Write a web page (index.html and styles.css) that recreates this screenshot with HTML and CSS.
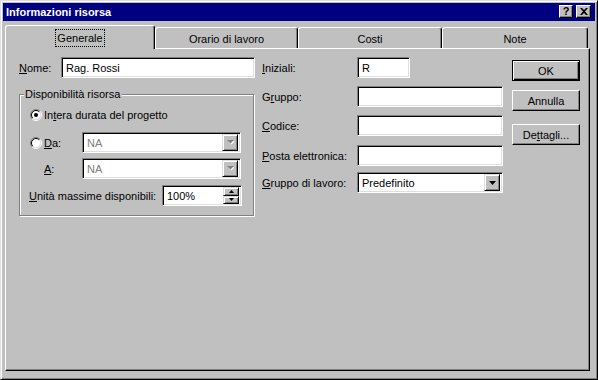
FILE: index.html
```html
<!DOCTYPE html>
<html lang="it">
<head>
  <meta charset="UTF-8">
  <title>Informazioni risorsa</title>
  <link rel="stylesheet" href="styles.css">
</head>
<body>

<div class="window">
  <div class="titlebar">
    <span class="title">Informazioni risorsa</span>
    <span class="cap-btn help">?</span>
    <span class="cap-btn close">
      <svg width="8" height="7" viewBox="0 0 8 7"><path d="M0 0h2l2 2 2-2h2L5 3.5 8 7H6L4 5 2 7H0l3-3.5z" fill="#000"/></svg>
    </span>
  </div>

  <div class="tabs">
    <div class="tab active" style="width:150px"><span class="focus">Generale</span></div>
    <div class="tab" style="width:143px">Orario di lavoro</div>
    <div class="tab" style="width:144px">Costi</div>
    <div class="tab" style="width:146px">Note</div>
  </div>

  <div class="panel">
    <!-- colonna sinistra -->
    <div class="col-left">
      <div class="row">
        <span class="lbl" style="width:42px"><u>N</u>ome:</span>
        <div class="field" style="width:194px">Rag. Rossi</div>
      </div>

      <div class="group">
        <span class="legend">Disponibilità risorsa</span>
        <div class="row radio-row">
          <svg class="radio" width="12" height="12" viewBox="0 0 12 12">
            <circle cx="6" cy="6" r="4.5" fill="#fff"/>
            <path d="M9.9 2.1A5.5 5.5 0 0 0 2.1 9.9" stroke="#808080" fill="none"/>
            <path d="M9.9 2.1A5.5 5.5 0 0 1 2.1 9.9" stroke="#fff" fill="none"/>
            <path d="M9.2 2.8A4.5 4.5 0 0 0 2.8 9.2" stroke="#000" fill="none"/>
            <path d="M9.2 2.8A4.5 4.5 0 0 1 2.8 9.2" stroke="#dfdfdf" fill="none"/>
            <circle cx="6" cy="6" r="2" fill="#000"/>
          </svg>
          <span>In<u>t</u>era durata del progetto</span>
        </div>
        <div class="row gap5">
          <span class="lbl" style="width:52px">
            <svg class="radio" width="12" height="12" viewBox="0 0 12 12">
              <circle cx="6" cy="6" r="4.5" fill="#fff"/>
              <path d="M9.9 2.1A5.5 5.5 0 0 0 2.1 9.9" stroke="#808080" fill="none"/>
              <path d="M9.9 2.1A5.5 5.5 0 0 1 2.1 9.9" stroke="#fff" fill="none"/>
              <path d="M9.2 2.8A4.5 4.5 0 0 0 2.8 9.2" stroke="#000" fill="none"/>
              <path d="M9.2 2.8A4.5 4.5 0 0 1 2.8 9.2" stroke="#dfdfdf" fill="none"/>
            </svg>
            <u>D</u>a:
          </span>
          <div class="field combo disabled" style="width:159px">
            <span class="val">NA</span>
            <span class="drop"><svg width="7" height="5" viewBox="0 0 7 5"><path d="M1 1h7L4.5 4.5z" fill="#fff"/><path d="M0 0h7L3.5 3.5z" fill="#808080"/></svg></span>
          </div>
        </div>
        <div class="row gap6">
          <span class="lbl indent" style="width:52px"><u>A</u>:</span>
          <div class="field combo disabled" style="width:159px">
            <span class="val">NA</span>
            <span class="drop"><svg width="7" height="5" viewBox="0 0 7 5"><path d="M1 1h7L4.5 4.5z" fill="#fff"/><path d="M0 0h7L3.5 3.5z" fill="#808080"/></svg></span>
          </div>
        </div>
        <div class="row">
          <span class="lbl unita" style="width:132px"><u>U</u>nità massime disponibili:</span>
          <div class="field combo" style="width:80px">
            <span class="val">100%</span>
            <span class="spin">
              <span class="spin-btn"><svg width="5" height="3" viewBox="0 0 5 3"><path d="M2.5 0L5 3H0z" fill="#000"/></svg></span>
              <span class="spin-btn"><svg width="5" height="3" viewBox="0 0 5 3"><path d="M0 0h5L2.5 3z" fill="#000"/></svg></span>
            </span>
          </div>
        </div>
      </div>
    </div>

    <!-- colonna centrale -->
    <div class="col-mid">
      <div class="row">
        <span class="lbl mid-lbl"><u>I</u>niziali:</span>
        <div class="field" style="width:53px">R</div>
      </div>
      <div class="row m8">
        <span class="lbl mid-lbl">G<u>r</u>uppo:</span>
        <div class="field" style="width:146px"></div>
      </div>
      <div class="row m8">
        <span class="lbl mid-lbl"><u>C</u>odice:</span>
        <div class="field" style="width:146px"></div>
      </div>
      <div class="row m9">
        <span class="lbl mid-lbl"><u>P</u>osta elettronica:</span>
        <div class="field" style="width:146px"></div>
      </div>
      <div class="row m6">
        <span class="lbl mid-lbl"><u>G</u>ruppo di lavoro:</span>
        <div class="field combo" style="width:146px">
          <span class="val">Predefinito</span>
          <span class="drop"><svg width="7" height="4" viewBox="0 0 7 4"><path d="M0 0h7L3.5 4z" fill="#000"/></svg></span>
        </div>
      </div>
    </div>

    <!-- pulsanti -->
    <div class="col-btns">
      <div class="btn default">OK</div>
      <div class="btn m9">Annulla</div>
      <div class="btn m13">De<u>t</u>tagli...</div>
    </div>
  </div>
</div>

</body>
</html>
```

FILE: styles.css
```css
* {
  box-sizing: border-box;
}

body {
  margin: 0;
  font-family: "Liberation Sans", Arial, sans-serif;
  font-size: 11px;
  color: #000;
  background: #c0c0c0;
}

.window {
  width: 598px;
  height: 380px;
  background: #c0c0c0;
  border: 1px solid;
  border-color: #dfdfdf #000 #000 #dfdfdf;
  box-shadow: inset 1px 1px #fff, inset -1px -1px #808080;
  padding: 2px;
  display: flex;
  flex-direction: column;
}

/* barra del titolo */
.titlebar {
  height: 18px;
  flex: none;
  background: #000080;
  color: #fff;
  display: flex;
  align-items: center;
  padding: 0 4px 0 3px;
}

.title {
  flex: 1;
  font-weight: bold;
}

.cap-btn {
  width: 14px;
  height: 13px;
  margin-top: -1px;
  background: #c0c0c0;
  color: #000;
  border: 1px solid;
  border-color: #fff #000 #000 #fff;
  box-shadow: inset -1px -1px #808080;
  display: flex;
  align-items: center;
  justify-content: center;
  font-weight: bold;
  font-size: 11px;
  line-height: 1;
}

.cap-btn.close {
  margin-left: 3px;
  width: 15px;
}

/* schede */
.tabs {
  height: 27px;
  flex: none;
  display: flex;
  align-items: flex-end;
  padding-left: 2px;
}

.tab {
  height: 21px;
  border: 1px solid;
  border-bottom: none;
  border-color: #fff #000 #000 #fff;
  border-radius: 3px 3px 0 0;
  box-shadow: inset -1px 0 #808080;
  display: flex;
  align-items: center;
  justify-content: center;
  padding-top: 1px;
}

.tab.active {
  height: 24px;
  margin-bottom: -1px;
  position: relative;
  z-index: 1;
  background: #c0c0c0;
}

.focus {
  outline: 1px dotted #000;
  outline-offset: 1px;
  padding: 1px 0;
}

/* pannello */
.panel {
  flex: 1;
  margin: 0 5px 6px 2px;
  border: 1px solid;
  border-color: #fff #000 #000 #fff;
  box-shadow: inset -1px -1px #808080;
  display: flex;
  align-items: flex-start;
  padding: 8px 0 0 13px;
}

.col-left {
  width: 236px;
}

.col-mid {
  width: 241px;
  margin-left: 7px;
}

.col-btns {
  width: 68px;
  margin-left: 9px;
  padding-top: 3px;
}

.row {
  display: flex;
  align-items: center;
  height: 21px;
}

.lbl {
  flex: none;
  display: flex;
  align-items: center;
  white-space: nowrap;
}

.mid-lbl {
  width: 95px;
}

.indent {
  padding-left: 14px;
}

.unita {
  margin-left: -1px;
  margin-right: 1px;
}

.m6 { margin-top: 6px; }
.m8 { margin-top: 8px; }
.m9 { margin-top: 9px; }
.m13 { margin-top: 13px; }
.gap5 { margin-bottom: 5px; }
.gap6 { margin-bottom: 6px; }

/* campi incassati */
.field {
  height: 21px;
  flex: none;
  background: #fff;
  border: 1px solid;
  border-color: #808080 #fff #fff #808080;
  box-shadow: inset 1px 1px #000, inset -1px -1px #dfdfdf;
  padding: 0 2px 0 4px;
  display: flex;
  align-items: center;
  white-space: nowrap;
}

.combo {
  padding-right: 2px;
}

.combo .val {
  flex: 1;
}

.disabled .val {
  color: #808080;
}

.drop {
  width: 16px;
  height: 17px;
  background: #c0c0c0;
  border: 1px solid;
  border-color: #dfdfdf #000 #000 #dfdfdf;
  box-shadow: inset 1px 1px #fff, inset -1px -1px #808080;
  display: flex;
  align-items: center;
  justify-content: center;
}

.spin {
  width: 16px;
  height: 17px;
  display: flex;
  flex-direction: column;
}

.spin-btn {
  flex: 1;
  background: #c0c0c0;
  border: 1px solid;
  border-color: #dfdfdf #000 #000 #dfdfdf;
  box-shadow: inset 1px 1px #fff, inset -1px -1px #808080;
  display: flex;
  align-items: center;
  justify-content: center;
}

/* riquadro di gruppo */
.group {
  position: relative;
  width: 235px;
  margin-top: 16px;
  border: 1px solid #808080;
  box-shadow: inset 1px 1px #fff, 1px 1px #fff;
  padding: 12px 0 9px 10px;
}

.legend {
  position: absolute;
  top: -7px;
  left: 4px;
  padding: 0 2px 0 1px;
  background: #c0c0c0;
  line-height: 13px;
}

.radio-row {
  height: 16px;
  margin-bottom: 9px;
}

.radio {
  flex: none;
  margin-right: 2px;
}

/* pulsanti */
.btn {
  height: 21px;
  background: #c0c0c0;
  border: 1px solid;
  border-color: #fff #000 #000 #fff;
  box-shadow: inset -1px -1px #808080;
  display: flex;
  align-items: center;
  justify-content: center;
}

.btn.default {
  border-color: #000;
  box-shadow: inset 1px 1px #fff, inset -1px -1px #000, inset -2px -2px #808080;
}
```
